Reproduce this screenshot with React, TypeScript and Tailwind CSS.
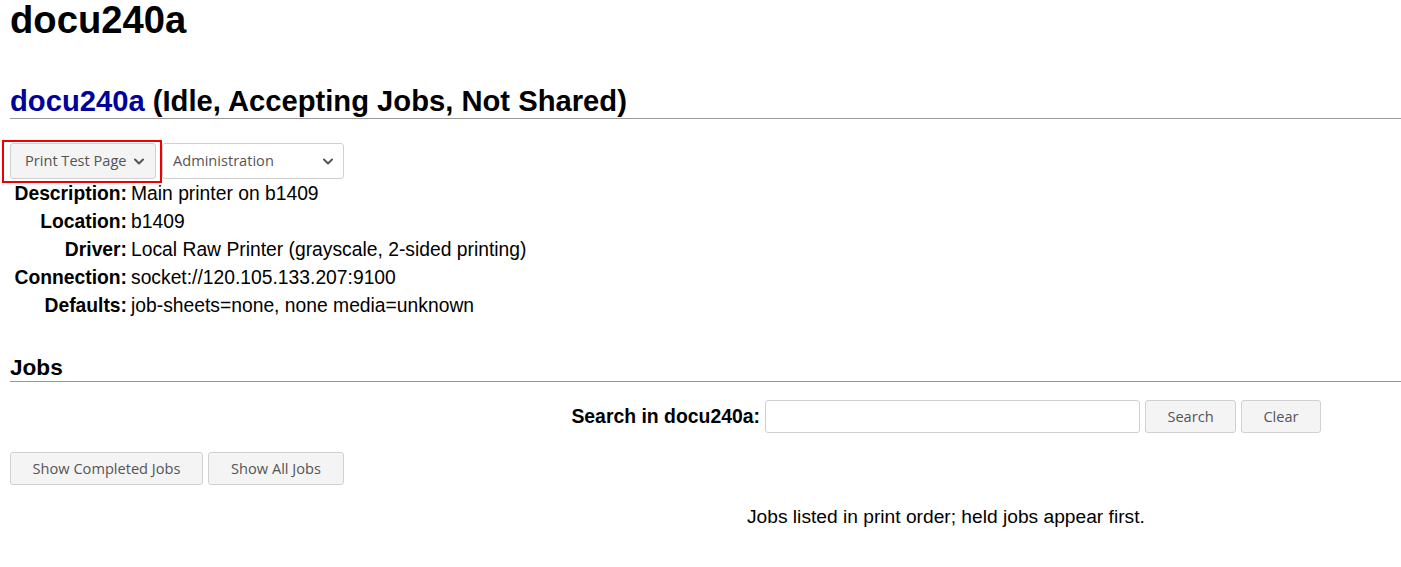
import React from "react"

function Chevron() {
    return (
        <svg width="10" height="7" viewBox="0 0 10 7" className="shrink-0">
            <polyline points="1,1.5 5,5.5 9,1.5" fill="none" stroke="#555" strokeWidth="2" strokeLinecap="round" strokeLinejoin="round" />
        </svg>
    )
}

const btn =
    "h-[33px] flex items-center justify-center rounded-[3px] border border-[#d0d0d0] bg-[#f4f4f4] text-[14.6px] text-[#555] font-['Open_Sans',sans-serif]"

export default function App() {
    const rows = [
        ["Description:", "Main printer on b1409"],
        ["Location:", "b1409"],
        ["Driver:", "Local Raw Printer (grayscale, 2-sided printing)"],
        ["Connection:", "socket://120.105.133.207:9100"],
        ["Defaults:", "job-sheets=none, none media=unknown"],
    ]

    return (
        <div className="relative min-h-[567px] bg-white pl-[10px] font-['Liberation_Sans',Arial,sans-serif] text-black">
            <h1 className="mt-[-2px] text-[38.2px] font-bold leading-[44px]">docu240a</h1>

            <h2 className="mt-[43px] border-b border-[#999] text-[29.2px] font-bold leading-[33px]">
                <span className="text-[#00009c]">docu240a</span> (Idle, Accepting Jobs, Not Shared)
            </h2>

            {/* Printer actions */}
            <div className="mt-[24px] flex gap-[6px]">
                <div className={btn + " h-[36px] w-[146px] gap-[7px] justify-start pl-[14px]"}>
                    <span>Print Test Page</span>
                    <Chevron />
                </div>
                <div className="flex h-[36px] w-[182px] items-center justify-between rounded-[3px] border border-[#d0d0d0] bg-white pl-[10px] pr-[10px] font-['Open_Sans',sans-serif] text-[14.6px] text-[#555]">
                    <span>Administration</span>
                    <Chevron />
                </div>
            </div>

            {/* Highlight */}
            <div className="absolute left-[2px] top-[142px] h-[43px] w-[160px] border-2 border-[#ee0000]" />

            {/* Printer details */}
            <div className="mt-[1px] grid grid-cols-[117px_1fr] gap-x-[4px] text-[19.3px] leading-[28px]">
                {rows.map(([label, value]) => (
                    <React.Fragment key={label}>
                        <div className="text-right font-bold">{label}</div>
                        <div>{value}</div>
                    </React.Fragment>
                ))}
            </div>

            <h3 className="mt-[35px] border-b border-[#999] text-[22.6px] font-bold leading-[26px]">Jobs</h3>

            {/* Search */}
            <div className="mt-[18px] flex items-center justify-end gap-[5px] pr-[80px]">
                <span className="text-[19.4px] font-bold">Search in docu240a:</span>
                <div className="h-[33px] w-[375px] rounded-[3px] border border-[#d0d0d0] bg-white" />
                <div className={btn + " w-[91px]"}>Search</div>
                <div className={btn + " w-[80px]"}>Clear</div>
            </div>

            <div className="mt-[19px] flex gap-[5px]">
                <div className={btn + " w-[193px]"}>Show Completed Jobs</div>
                <div className={btn + " w-[136px]"}>Show All Jobs</div>
            </div>

            <p className="mt-[21px] pl-[737px] text-[19.2px] leading-[22px]">
                Jobs listed in print order; held jobs appear first.
            </p>
        </div>
    )
}
